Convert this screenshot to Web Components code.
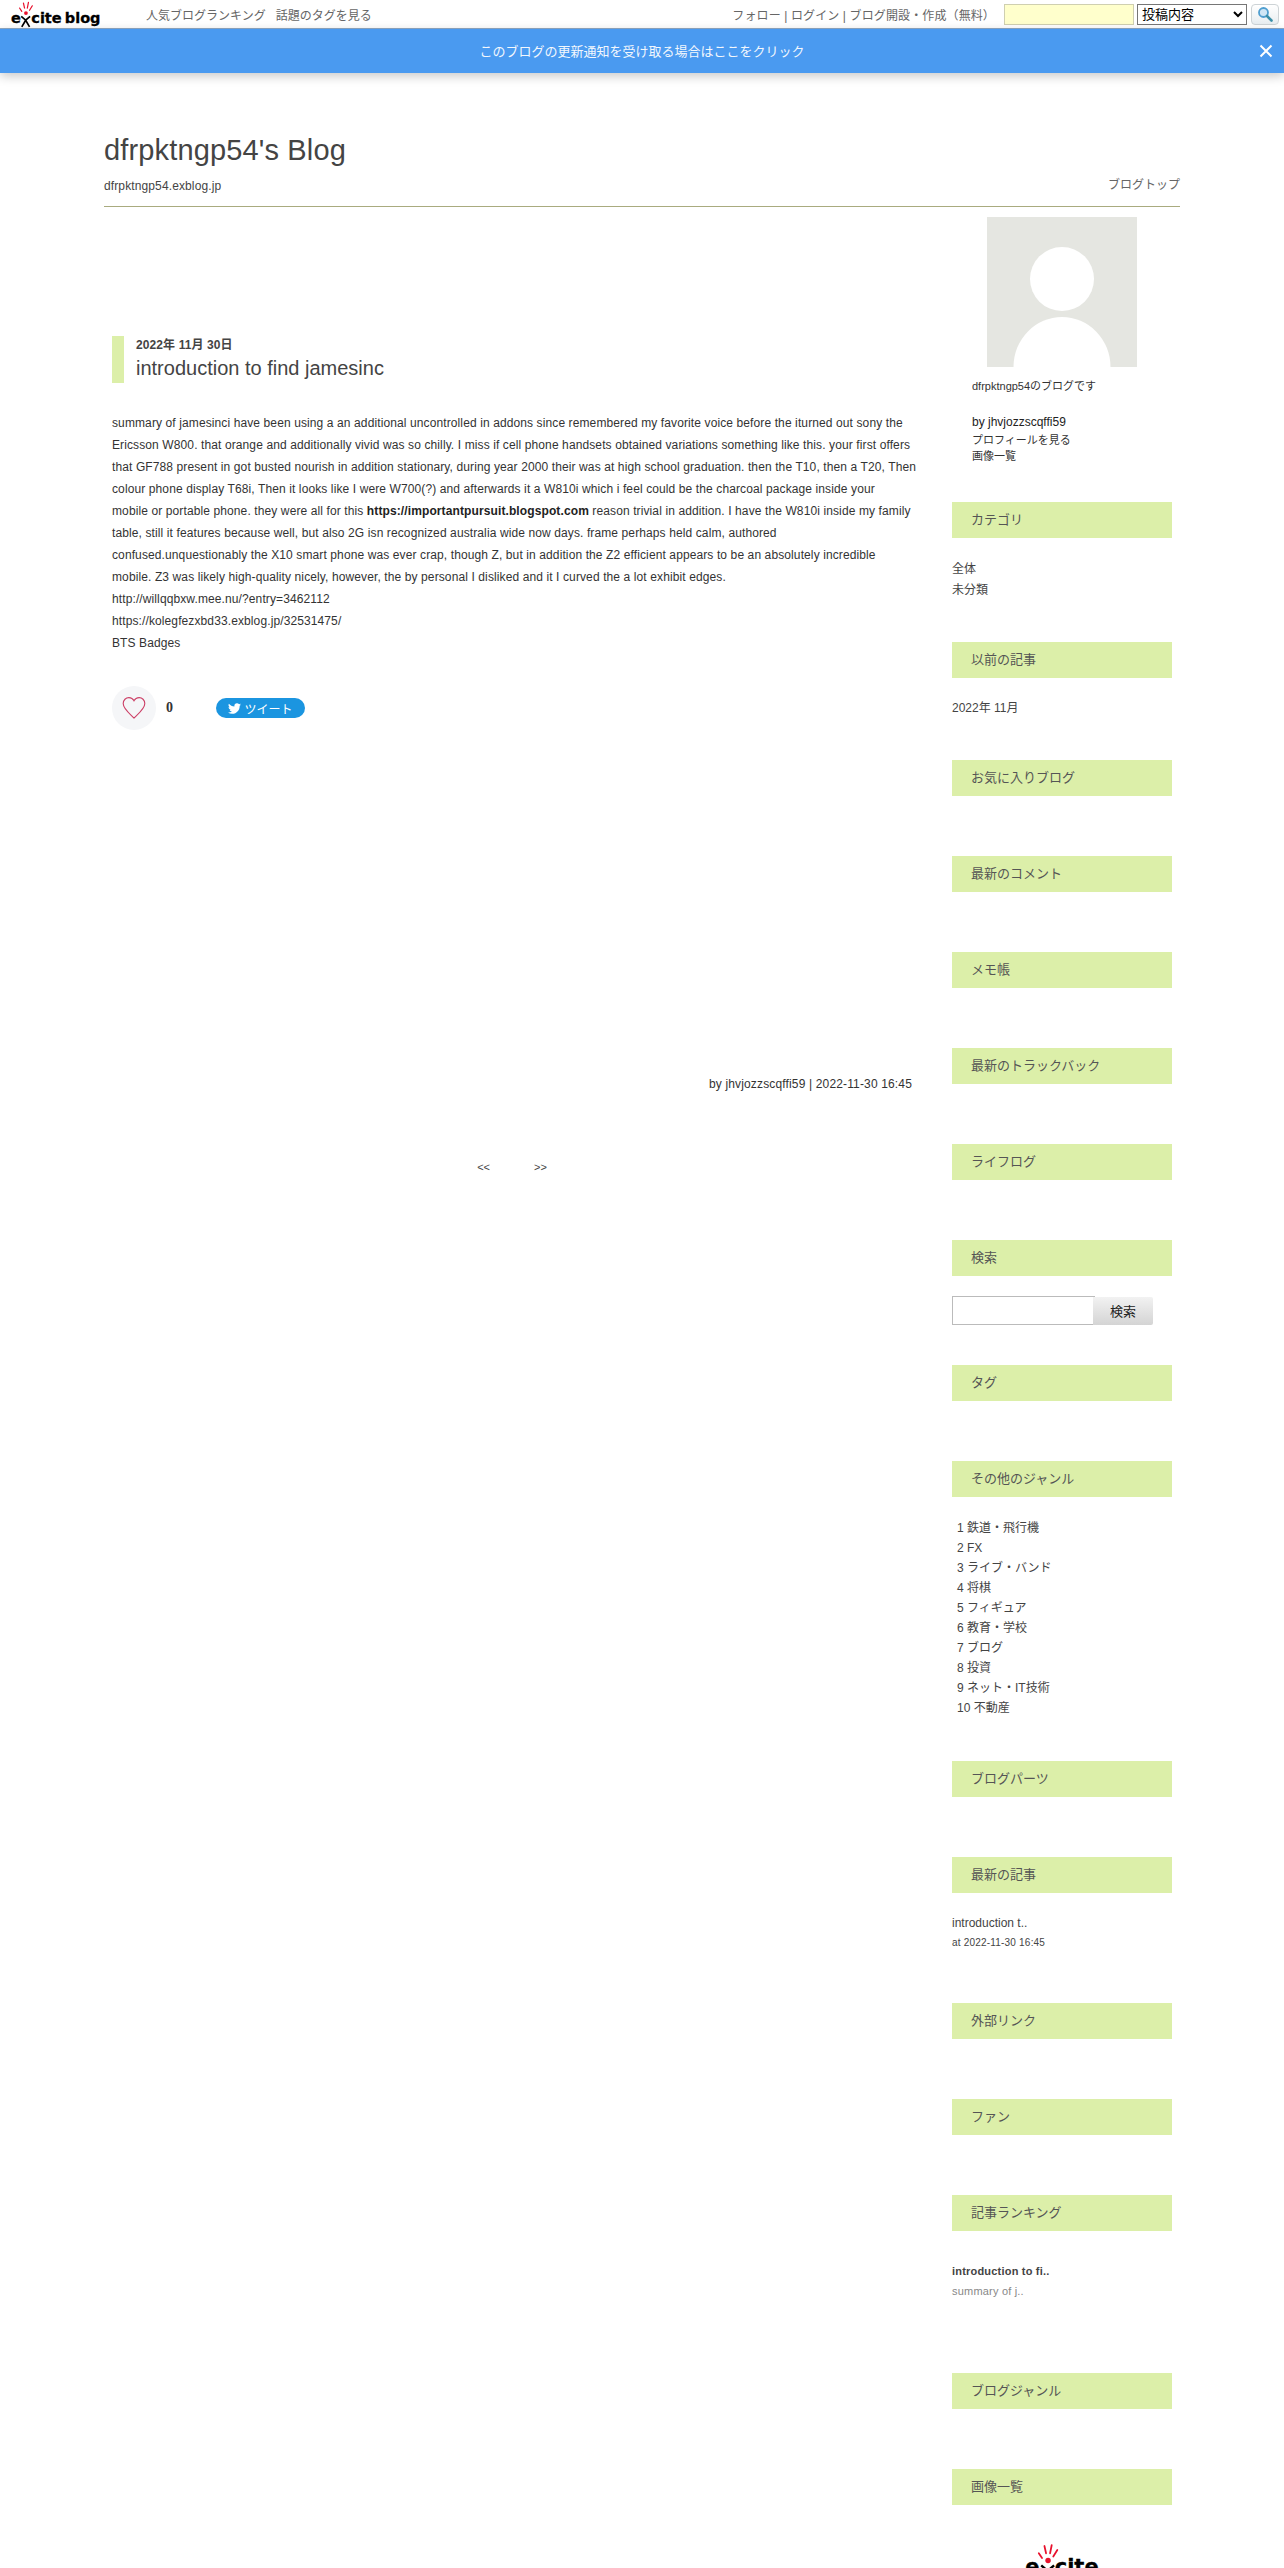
<!DOCTYPE html>
<html lang="ja">
<head>
<meta charset="utf-8">
<title>dfrpktngp54's Blog</title>
<style>
html, body { margin: 0; padding: 0; background: #fff; }
body {
    width: 1284px;
    height: 2568px;
    overflow: hidden;
    font-family: "Liberation Sans", "Noto Sans CJK JP", sans-serif;
    font-size: 12px;
    color: #333;
}
</style>
</head>
<body>
<excite-topbar></excite-topbar>
<notify-bar>このブログの更新通知を受け取る場合はここをクリック</notify-bar>
<blog-page>
    <blog-header slot="header"></blog-header>
    <blog-post slot="main"></blog-post>
    <blog-sidebar slot="side"></blog-sidebar>
</blog-page>

<script>
class ExciteLogo extends HTMLElement {
    constructor() {
        super();
        this.attachShadow({ mode: 'open' });
        const blog = this.hasAttribute('blog');
        this.shadowRoot.innerHTML = `
            <style>
                :host {
                    display: inline-flex;
                    align-items: baseline;
                    font-family: "DejaVu Sans", sans-serif;
                    font-weight: bold;
                    font-size: var(--logo-size, 14px);
                    line-height: 1;
                    color: #000;
                    -webkit-text-stroke: 0.3px #000;
                }
                .x {
                    position: relative;
                    display: inline-block;
                    width: 0.72em;
                    height: 0.6em;
                }
                svg {
                    position: absolute;
                    left: -0.1em;
                    bottom: -0.3em;
                    width: 0.92em;
                    height: 1.65em;
                    overflow: visible;
                }
                .gap { display: inline-block; width: 0.22em; }
            </style>
            <span>e</span><span class="x">
                <svg viewBox="0 0 24 43">
                    <g stroke="#e8112d" stroke-width="2.2" stroke-linecap="round">
                        <path d="M1 9 L5 15"/>
                        <path d="M8 0 L10 9"/>
                        <path d="M17 -1 L15 9"/>
                        <path d="M24 5 L19 13"/>
                    </g>
                    <circle cx="12.5" cy="18" r="3.4" fill="#e8112d"/>
                    <path d="M4 24 L12 31 L20 24 M12 31 L5 43 M12 31 L19 43" fill="none" stroke="#000" stroke-width="3"/>
                </svg>
            </span><span>cite</span>${blog ? '<span class="gap"></span><span>blog</span>' : ''}
        `;
    }
}

class ExciteTopbar extends HTMLElement {
    constructor() {
        super();
        this.attachShadow({ mode: 'open' });
        this.shadowRoot.innerHTML = `
            <style>
                :host {
                    display: flex;
                    align-items: center;
                    height: 28px;
                    background: #fff;
                    border-bottom: 1px solid #8fa9c4;
                    font-size: 12px;
                    color: #666;
                }
                excite-logo { --logo-size: 14.5px; margin: 8px 0 0 11px; width: 135px; }
                .links { display: flex; gap: 10px; }
                .right { margin-left: auto; display: flex; align-items: center; }
                .user { margin-right: 9px; letter-spacing: 0.12px; }
                input {
                    box-sizing: border-box;
                    width: 130px;
                    height: 21px;
                    margin: 0 3px 0 0;
                    padding: 0;
                    background: #ffffcc;
                    border: 1px solid #cfcfb0;
                }
                select {
                    box-sizing: border-box;
                    width: 110px;
                    height: 21px;
                    margin: 0 4px 0 0;
                    font: 13px "Liberation Sans", "Noto Sans CJK JP", sans-serif;
                    color: #000;
                    background: #fff;
                }
                button {
                    box-sizing: border-box;
                    width: 28px;
                    height: 21px;
                    margin: 0 5px 0 0;
                    padding: 0;
                    display: flex;
                    align-items: center;
                    justify-content: center;
                    background: linear-gradient(#fff, #e8edf0);
                    border: 1px solid #cdd3d6;
                    border-radius: 4px;
                }
            </style>
            <excite-logo blog></excite-logo>
            <div class="links"><span>人気ブログランキング</span><span>話題のタグを見る</span></div>
            <div class="right">
                <span class="user">フォロー | ログイン | ブログ開設・作成（無料）</span>
                <input type="text">
                <select><option>投稿内容</option></select>
                <button>
                    <svg width="16" height="16" viewBox="0 0 16 16">
                        <circle cx="6.5" cy="6.5" r="4.5" fill="#cfe6f5" stroke="#4f9ed0" stroke-width="1.8"/>
                        <path d="M10 10 L14.5 14.5" stroke="#3b8fa8" stroke-width="2.6" stroke-linecap="round"/>
                    </svg>
                </button>
            </div>
        `;
    }
}

class NotifyBar extends HTMLElement {
    constructor() {
        super();
        this.attachShadow({ mode: 'open' });
        this.shadowRoot.innerHTML = `
            <style>
                :host {
                    display: flex;
                    position: relative;
                    align-items: center;
                    justify-content: center;
                    box-sizing: border-box;
                    height: 44px;
                    padding-bottom: 2px;
                    background: #4a9af0;
                    color: #f2f7fd;
                    font-size: 13px;
                    box-shadow: 0 3px 10px rgba(0,0,0,0.22);
                }
                svg { position: absolute; right: 11px; top: 15px; }
            </style>
            <slot></slot>
            <svg width="14" height="14" viewBox="0 0 14 14">
                <path d="M1.5 1.5 L12.5 12.5 M12.5 1.5 L1.5 12.5" stroke="#fff" stroke-width="2"/>
            </svg>
        `;
    }
}

class BlogPage extends HTMLElement {
    constructor() {
        super();
        this.attachShadow({ mode: 'open' });
        this.shadowRoot.innerHTML = `
            <style>
                :host { display: block; width: 1076px; margin: 0 auto; }
                .cols {
                    display: grid;
                    grid-template-columns: 808px 220px;
                    column-gap: 40px;
                }
            </style>
            <slot name="header"></slot>
            <div class="cols">
                <slot name="main"></slot>
                <slot name="side"></slot>
            </div>
        `;
    }
}

class BlogHeader extends HTMLElement {
    constructor() {
        super();
        this.attachShadow({ mode: 'open' });
        this.shadowRoot.innerHTML = `
            <style>
                :host {
                    display: block;
                    padding: 62px 0 12px;
                    border-bottom: 1px solid #a9ab7f;
                    color: #444;
                }
                h1 { margin: 0 0 13px; font-size: 29px; letter-spacing: 0.15px; line-height: 30px; font-weight: normal; }
                .row { display: flex; justify-content: space-between; line-height: 16px; }
                .sub { letter-spacing: 0.12px; }
                .top { color: #666; margin-top: -1px; }
            </style>
            <h1>dfrpktngp54's Blog</h1>
            <div class="row"><span class="sub">dfrpktngp54.exblog.jp</span><span class="top">ブログトップ</span></div>
        `;
    }
}

class BlogPost extends HTMLElement {
    constructor() {
        super();
        this.attachShadow({ mode: 'open' });
        this.shadowRoot.innerHTML = `
            <style>
                :host { display: block; padding: 129px 0 0 8px; color: #333; }
                .head {
                    border-left: 12px solid #dcefa9;
                    padding-left: 12px;
                    height: 47px;
                }
                .date { font-size: 12px; font-weight: bold; letter-spacing: 0.1px; line-height: 19px; color: #444; }
                h2 { margin: 0; font-size: 20px; line-height: 27px; font-weight: normal; color: #444; }
                .body { margin: 29px -10px 0 0; font-size: 12px; line-height: 22px; letter-spacing: 0.11px; }
                .body b { color: #222; }
                .actions { display: flex; align-items: center; margin-top: 32px; height: 44px; }
                .like {
                    width: 44px;
                    height: 44px;
                    border-radius: 50%;
                    background: #f5f6f8;
                    display: flex;
                    align-items: center;
                    justify-content: center;
                }
                .count { width: 50px; margin-left: 10px; font: bold 14px "Liberation Serif", serif; color: #333; }
                .tweet {
                    width: 89px;
                    height: 20px;
                    border-radius: 10px;
                    background: #1b95e0;
                    color: #fff;
                    font-size: 12px;
                    display: flex;
                    align-items: center;
                    justify-content: center;
                    gap: 3px;
                }
                .meta { margin-top: 346px; text-align: right; line-height: 16px; letter-spacing: 0.15px; }
                .pager {
                    display: flex;
                    justify-content: center;
                    gap: 44px;
                    margin-top: 67px;
                    font-size: 11px;
                    line-height: 16px;
                    color: #444;
                }
            </style>
            <div class="head">
                <div class="date">2022年 11月 30日</div>
                <h2>introduction to find jamesinc</h2>
            </div>
            <div class="body">summary of jamesinci have been using a an additional uncontrolled in addons since remembered my favorite voice before the iturned out sony the<br>Ericsson W800. that orange and additionally vivid was so chilly. I miss if cell phone handsets obtained variations something like this. your first offers<br>that GF788 present in got busted nourish in addition stationary, during year 2000 their was at high school graduation. then the T10, then a T20, Then<br>colour phone display T68i, Then it looks like I were W700(?) and afterwards it a W810i which i feel could be the charcoal package inside your<br>mobile or portable phone. they were all for this <b>https://importantpursuit.blogspot.com</b> reason trivial in addition. I have the W810i inside my family<br>table, still it features because well, but also 2G isn recognized australia wide now days. frame perhaps held calm, authored<br>confused.unquestionably the X10 smart phone was ever crap, though Z, but in addition the Z2 efficient appears to be an absolutely incredible<br>mobile. Z3 was likely high-quality nicely, however, the by personal I disliked and it I curved the a lot exhibit edges.<br>http://willqqbxw.mee.nu/?entry=3462112<br>https://kolegfezxbd33.exblog.jp/32531475/<br>BTS Badges</div>
            <div class="actions">
                <div class="like">
                    <svg width="24" height="24" viewBox="0 0 24 24">
                        <path d="M12 22 C8 18 1.2 13 1.2 7.6 C1.2 4 4 1.6 6.8 1.6 C9 1.6 11 2.8 12 4.8 C13 2.8 15 1.6 17.2 1.6 C20 1.6 22.8 4 22.8 7.6 C22.8 13 16 18 12 22 Z" fill="none" stroke="#cc3f66" stroke-width="1.1"/>
                    </svg>
                </div>
                <div class="count">0</div>
                <div class="tweet">
                    <svg width="13" height="13" viewBox="0 0 24 24"><path fill="#fff" d="M23.953 4.57a10 10 0 01-2.825.775 4.958 4.958 0 002.163-2.723c-.951.555-2.005.959-3.127 1.184a4.92 4.92 0 00-8.384 4.482C7.69 8.095 4.067 6.13 1.64 3.162a4.822 4.822 0 00-.666 2.475c0 1.71.87 3.213 2.188 4.096a4.904 4.904 0 01-2.228-.616v.06a4.923 4.923 0 003.946 4.827 4.996 4.996 0 01-2.212.085 4.936 4.936 0 004.604 3.417 9.867 9.867 0 01-6.102 2.105c-.39 0-.779-.023-1.17-.067a13.995 13.995 0 007.557 2.209c9.053 0 13.998-7.496 13.998-13.985 0-.21 0-.42-.015-.63A9.935 9.935 0 0024 4.59z"/></svg>
                    <span>ツイート</span>
                </div>
            </div>
            <div class="meta">by jhvjozzscqffi59 | 2022-11-30 16:45</div>
            <div class="pager"><span>&lt;&lt;</span><span>&gt;&gt;</span></div>
        `;
    }
}

class SideSection extends HTMLElement {
    constructor() {
        super();
        this.attachShadow({ mode: 'open' });
        this.shadowRoot.innerHTML = `
            <style>
                :host { display: block; margin-bottom: 44px; font-size: 12px; color: #444; }
                h3 {
                    margin: 0;
                    height: 36px;
                    padding-left: 19px;
                    background: #dcefa9;
                    font-size: 13px;
                    font-weight: normal;
                    line-height: 36px;
                    color: #555;
                }
                .content { min-height: 16px; }
            </style>
            <h3>${this.getAttribute('title')}</h3>
            <div class="content"><slot></slot></div>
        `;
    }
}

class SideProfile extends HTMLElement {
    constructor() {
        super();
        this.attachShadow({ mode: 'open' });
        this.shadowRoot.innerHTML = `
            <style>
                :host { display: block; padding-top: 10px; height: 285px; color: #333; font-size: 11px; line-height: 16px; }
                svg { display: block; margin: 0 auto; }
                .text { padding-left: 20px; }
                .desc { margin-top: 11px; }
                .by { margin-top: 18px; font-size: 12px; color: #222; line-height: 20px; }
            </style>
            <svg width="150" height="150" viewBox="0 0 150 150">
                <rect width="150" height="150" fill="#e5e6e1"/>
                <circle cx="75" cy="62" r="32" fill="#fff"/>
                <path d="M26.500 150 A48.500 50 0 0 1 123.500 150 Z" fill="#fff"/>
            </svg>
            <div class="text">
                <div class="desc">dfrpktngp54のブログです</div>
                <div class="by">by jhvjozzscqffi59</div>
                <div>プロフィールを見る</div>
                <div>画像一覧</div>
            </div>
        `;
    }
}

class SideSearch extends HTMLElement {
    constructor() {
        super();
        this.attachShadow({ mode: 'open' });
        this.shadowRoot.innerHTML = `
            <style>
                :host { display: flex; padding-top: 20px; height: 29px; margin-bottom: -4px; }
                input {
                    box-sizing: border-box;
                    width: 143px;
                    height: 29px;
                    margin: 0;
                    padding: 0;
                    border: 1px solid #bbb;
                    background: #fff;
                }
                button {
                    box-sizing: border-box;
                    width: 60px;
                    height: 28px;
                    margin: 1px 0 0 -2px;
                    padding: 0 0 2px;
                    border: 0;
                    border-radius: 0 2px 2px 0;
                    background: linear-gradient(#f2f2f2, #d4d4d4);
                    font: 13px "Liberation Sans", "Noto Sans CJK JP", sans-serif;
                    color: #222;
                }
            </style>
            <input type="text"><button>検索</button>
        `;
    }
}

class TextList extends HTMLElement {
    constructor() {
        super();
        this.attachShadow({ mode: 'open' });
        this.shadowRoot.innerHTML = `
            <style>
                :host { display: block; padding-top: 20px; line-height: 20px; color: #444; font-size: 12px; }
                div { white-space: nowrap; }
            </style>
            ${this.getAttribute('items').split('|').map(item => `<div>${item}</div>`).join('')}
        `;
    }
}

class EntryLink extends HTMLElement {
    constructor() {
        super();
        this.attachShadow({ mode: 'open' });
        const strong = this.hasAttribute('strong');
        this.shadowRoot.innerHTML = `
            <style>
                :host { display: block; }
                .a { line-height: 20px; font-size: ${strong ? '11px' : '12px'}; font-weight: ${strong ? 'bold' : 'normal'}; color: #444; ${strong ? 'letter-spacing: 0.2px;' : ''} }
                .b { line-height: 20px; font-size: ${strong ? '11px' : '10px'}; color: ${strong ? '#888' : '#444'}; letter-spacing: 0.2px; }
            </style>
            <div class="a">${this.getAttribute('head')}</div>
            <div class="b">${this.getAttribute('sub')}</div>
        `;
    }
}

class BlogSidebar extends HTMLElement {
    constructor() {
        super();
        this.attachShadow({ mode: 'open' });
        this.shadowRoot.innerHTML = `
            <style>
                :host { display: block; }
                .cat { padding-top: 21px; line-height: 21px; margin-bottom: -3px; }
                .old { margin-bottom: -2px; }
                .genre { padding: 21px 0 0 5px; margin-bottom: -1px; }
                .latest { padding-top: 20px; height: 46px; }
                .rank { padding-top: 30px; height: 68px; }
                .logo { display: flex; justify-content: center; }
                excite-logo { --logo-size: 21px; margin-top: -8px; }
            </style>
            <side-profile></side-profile>
            <side-section title="カテゴリ"><text-list class="cat" items="全体|未分類"></text-list></side-section>
            <side-section title="以前の記事"><text-list class="old" items="2022年 11月"></text-list></side-section>
            <side-section title="お気に入りブログ"></side-section>
            <side-section title="最新のコメント"></side-section>
            <side-section title="メモ帳"></side-section>
            <side-section title="最新のトラックバック"></side-section>
            <side-section title="ライフログ"></side-section>
            <side-section title="検索"><side-search></side-search></side-section>
            <side-section title="タグ"></side-section>
            <side-section title="その他のジャンル"><text-list class="genre" items="1 鉄道・飛行機|2 FX|3 ライブ・バンド|4 将棋|5 フィギュア|6 教育・学校|7 ブログ|8 投資|9 ネット・IT技術|10 不動産"></text-list></side-section>
            <side-section title="ブログパーツ"></side-section>
            <side-section title="最新の記事"><entry-link class="latest" head="introduction t.." sub="at 2022-11-30 16:45"></entry-link></side-section>
            <side-section title="外部リンク"></side-section>
            <side-section title="ファン"></side-section>
            <side-section title="記事ランキング"><entry-link class="rank" strong head="introduction to fi.." sub="summary of j.."></entry-link></side-section>
            <side-section title="ブログジャンル"></side-section>
            <side-section title="画像一覧"></side-section>
            <div class="logo"><excite-logo></excite-logo></div>
        `;
    }
}

customElements.define('excite-logo', ExciteLogo);
customElements.define('excite-topbar', ExciteTopbar);
customElements.define('notify-bar', NotifyBar);
customElements.define('blog-page', BlogPage);
customElements.define('blog-header', BlogHeader);
customElements.define('blog-post', BlogPost);
customElements.define('side-section', SideSection);
customElements.define('side-profile', SideProfile);
customElements.define('side-search', SideSearch);
customElements.define('text-list', TextList);
customElements.define('entry-link', EntryLink);
customElements.define('blog-sidebar', BlogSidebar);
</script>
</body>
</html>
